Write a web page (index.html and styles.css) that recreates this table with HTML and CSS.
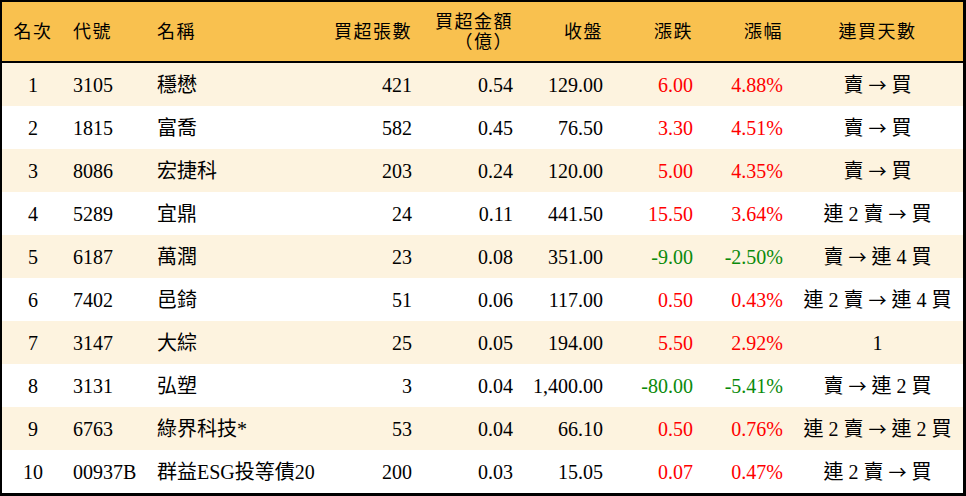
FILE: index.html
```html
<!DOCTYPE html>
<html lang="zh-Hant">
<head>
<meta charset="utf-8">
<title>買超排行</title>
<link rel="stylesheet" href="styles.css">
</head>
<body>
<table class="rank">
  <colgroup>
    <col class="c1"><col class="c2"><col class="c3"><col class="c4"><col class="c5"><col class="c6"><col class="c7"><col class="c8"><col class="c9">
  </colgroup>
  <thead>
    <tr>
      <th class="ctr">名次</th>
      <th class="lft">代號</th>
      <th class="lft">名稱</th>
      <th class="rgt">買超張數</th>
      <th class="rgt">買超金額<br>（億）</th>
      <th class="rgt">收盤</th>
      <th class="rgt">漲跌</th>
      <th class="rgt">漲幅</th>
      <th class="ctr">連買天數</th>
    </tr>
  </thead>
  <tbody>
    <tr class="alt"><td class="ctr">1</td><td>3105</td><td>穩懋</td><td class="rgt">421</td><td class="rgt">0.54</td><td class="rgt">129.00</td><td class="rgt up">6.00</td><td class="rgt up">4.88%</td><td class="ctr">賣 <span class="arr">→</span> 買</td></tr>
    <tr><td class="ctr">2</td><td>1815</td><td>富喬</td><td class="rgt">582</td><td class="rgt">0.45</td><td class="rgt">76.50</td><td class="rgt up">3.30</td><td class="rgt up">4.51%</td><td class="ctr">賣 <span class="arr">→</span> 買</td></tr>
    <tr class="alt"><td class="ctr">3</td><td>8086</td><td>宏捷科</td><td class="rgt">203</td><td class="rgt">0.24</td><td class="rgt">120.00</td><td class="rgt up">5.00</td><td class="rgt up">4.35%</td><td class="ctr">賣 <span class="arr">→</span> 買</td></tr>
    <tr><td class="ctr">4</td><td>5289</td><td>宜鼎</td><td class="rgt">24</td><td class="rgt">0.11</td><td class="rgt">441.50</td><td class="rgt up">15.50</td><td class="rgt up">3.64%</td><td class="ctr">連 2 賣 <span class="arr">→</span> 買</td></tr>
    <tr class="alt"><td class="ctr">5</td><td>6187</td><td>萬潤</td><td class="rgt">23</td><td class="rgt">0.08</td><td class="rgt">351.00</td><td class="rgt dn">-9.00</td><td class="rgt dn">-2.50%</td><td class="ctr">賣 <span class="arr">→</span> 連 4 買</td></tr>
    <tr><td class="ctr">6</td><td>7402</td><td>邑錡</td><td class="rgt">51</td><td class="rgt">0.06</td><td class="rgt">117.00</td><td class="rgt up">0.50</td><td class="rgt up">0.43%</td><td class="ctr">連 2 賣 <span class="arr">→</span> 連 4 買</td></tr>
    <tr class="alt"><td class="ctr">7</td><td>3147</td><td>大綜</td><td class="rgt">25</td><td class="rgt">0.05</td><td class="rgt">194.00</td><td class="rgt up">5.50</td><td class="rgt up">2.92%</td><td class="ctr">1</td></tr>
    <tr><td class="ctr">8</td><td>3131</td><td>弘塑</td><td class="rgt">3</td><td class="rgt">0.04</td><td class="rgt">1,400.00</td><td class="rgt dn">-80.00</td><td class="rgt dn">-5.41%</td><td class="ctr">賣 <span class="arr">→</span> 連 2 買</td></tr>
    <tr class="alt"><td class="ctr">9</td><td>6763</td><td>綠界科技*</td><td class="rgt">53</td><td class="rgt">0.04</td><td class="rgt">66.10</td><td class="rgt up">0.50</td><td class="rgt up">0.76%</td><td class="ctr">連 2 賣 <span class="arr">→</span> 連 2 買</td></tr>
    <tr><td class="ctr">10</td><td>00937B</td><td>群益ESG投等債20</td><td class="rgt">200</td><td class="rgt">0.03</td><td class="rgt">15.05</td><td class="rgt up">0.07</td><td class="rgt up">0.47%</td><td class="ctr">連 2 賣 <span class="arr">→</span> 買</td></tr>
  </tbody>
</table>
</body>
</html>
```
FILE: styles.css
```css
html, body {
  margin: 0;
  padding: 0;
  background: #ffffff;
}

.rank {
  width: 966px;
  height: 496px;
  border-collapse: separate;
  border-spacing: 0;
  border: 2px solid #000;
  border-right-width: 3px;
  border-bottom-width: 3px;
  table-layout: fixed;
  font-family: "Liberation Serif", "Noto Sans CJK TC", serif;
  font-size: 20px;
  color: #000;
  box-sizing: border-box;
}

.c1 { width: 62px; }
.c2 { width: 84px; }
.c3 { width: 177px; }
.c4 { width: 96px; }
.c5 { width: 101px; }
.c6 { width: 90px; }
.c7 { width: 90px; }
.c8 { width: 90px; }
.c9 { width: 171px; }

.rank th, .rank td {
  padding: 0 9px;
  white-space: nowrap;
  vertical-align: middle;
  text-align: left;
}

.rank thead th {
  height: 59px;
  background: #f9c14f;
  font-weight: normal;
  line-height: 20px;
  border-bottom: 2px solid #000;
  font-size: 18px;
  letter-spacing: 1.5px;
}

.rank tbody tr {
  height: 43px;
}

.rank tbody td {
  line-height: 22px;
}

.rank tbody tr.alt td {
  background: #fdf3df;
}

.rank .ctr { text-align: center; }
.rank .lft { text-align: left; }
.rank .rgt { text-align: right; }

.rank .up { color: #ff0000; }
.rank .dn { color: #0a8a0a; }

.arr {
  font-family: "Noto Sans CJK TC", sans-serif;
  font-size: 18px;
}
```
